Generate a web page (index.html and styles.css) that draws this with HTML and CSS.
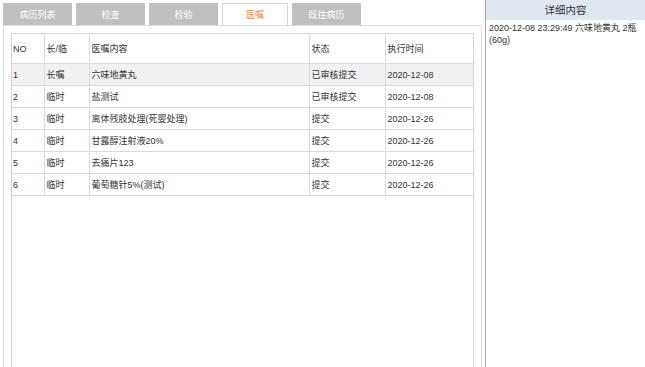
FILE: index.html
```html
<!DOCTYPE html>
<html lang="zh-CN">
<head>
    <meta charset="UTF-8">
    <title>医嘱</title>
    <link rel="stylesheet" href="styles.css">
</head>
<body>

<div class="layout">
    <div class="main">
        <div class="tabs">
            <span class="tab">病历列表</span>
            <span class="tab">检查</span>
            <span class="tab">检验</span>
            <span class="tab active">医嘱</span>
            <span class="tab">既往病历</span>
        </div>

        <div class="panel">
            <div class="grid-box">
                <table class="order-table">
                    <colgroup>
                        <col class="col-no">
                        <col class="col-type">
                        <col class="col-content">
                        <col class="col-state">
                        <col>
                    </colgroup>
                    <thead>
                        <tr>
                            <th>NO</th>
                            <th>长/临</th>
                            <th>医嘱内容</th>
                            <th>状态</th>
                            <th>执行时间</th>
                        </tr>
                    </thead>
                    <tbody>
                        <tr class="selected">
                            <td>1</td>
                            <td>长嘱</td>
                            <td>六味地黄丸</td>
                            <td>已审核提交</td>
                            <td>2020-12-08</td>
                        </tr>
                        <tr>
                            <td>2</td>
                            <td>临时</td>
                            <td>盐测试</td>
                            <td>已审核提交</td>
                            <td>2020-12-08</td>
                        </tr>
                        <tr>
                            <td>3</td>
                            <td>临时</td>
                            <td>离体残肢处理(死婴处理)</td>
                            <td>提交</td>
                            <td>2020-12-26</td>
                        </tr>
                        <tr>
                            <td>4</td>
                            <td>临时</td>
                            <td>甘露醇注射液20%</td>
                            <td>提交</td>
                            <td>2020-12-26</td>
                        </tr>
                        <tr>
                            <td>5</td>
                            <td>临时</td>
                            <td>去痛片123</td>
                            <td>提交</td>
                            <td>2020-12-26</td>
                        </tr>
                        <tr>
                            <td>6</td>
                            <td>临时</td>
                            <td>葡萄糖针5%(测试)</td>
                            <td>提交</td>
                            <td>2020-12-26</td>
                        </tr>
                    </tbody>
                </table>
            </div>
        </div>
    </div>

    <div class="detail">
        <div class="detail-title">详细内容</div>
        <div class="detail-body">2020-12-08 23:29:49 六味地黄丸 2瓶(60g)</div>
    </div>
</div>

</body>
</html>
```

FILE: styles.css
```css
body {
    font-family: "Liberation Sans", "Noto Sans CJK SC", sans-serif;
    font-size: 9px;
    color: #333;
    margin: 0;
    padding: 0;
    background-color: white;
}

.layout {
    display: flex;
    height: 367px;
    overflow: hidden;
}

.main {
    width: 485px;
    padding: 3px 0 0 3px;
    box-sizing: border-box;
    display: flex;
    flex-direction: column;
}

.tabs {
    display: flex;
    gap: 4px;
    height: 22px;
}

.tab {
    width: 69px;
    background-color: #c0c0c0;
    color: white;
    font-size: 9px;
    display: flex;
    align-items: center;
    justify-content: center;
}

.tab.active {
    background-color: white;
    color: #f0883a;
    border: 1px solid #d6d6d6;
    border-bottom: none;
    width: 66px;
    box-sizing: border-box;
}

.panel {
    flex: 1;
    width: 479px;
    box-sizing: border-box;
    border: 1px solid #dcdcdc;
    border-bottom: none;
    padding: 7px 7px 0 7px;
}

.grid-box {
    height: 100%;
    border: 1px solid #d4d4d4;
    border-bottom: none;
}

.order-table {
    width: 100%;
    border-collapse: collapse;
    table-layout: fixed;
}

.order-table th, .order-table td {
    border: 1px solid #dadada;
    text-align: left;
    font-weight: normal;
    padding: 0 0 0 2px;
    white-space: nowrap;
    overflow: hidden;
}

.order-table tr:first-child th {
    border-top: none;
}

.order-table th:first-child, .order-table td:first-child {
    border-left: none;
    padding-left: 1px;
}

.order-table th:last-child, .order-table td:last-child {
    border-right: none;
}

.order-table th {
    height: 29px;
}

.order-table td {
    height: 21px;
}

.order-table tr.selected td {
    background-color: #f1f1f1;
}

.col-no { width: 32px; }
.col-type { width: 45px; }
.col-content { width: 220px; }
.col-state { width: 76px; }

.detail {
    flex: 1;
    border-left: 1px solid #a8a8a8;
}

.detail-title {
    height: 20px;
    background-color: #dfe7ef;
    text-align: center;
    line-height: 20px;
    font-size: 10.5px;
}

.detail-body {
    padding: 2px 3px;
    line-height: 12px;
}
```
